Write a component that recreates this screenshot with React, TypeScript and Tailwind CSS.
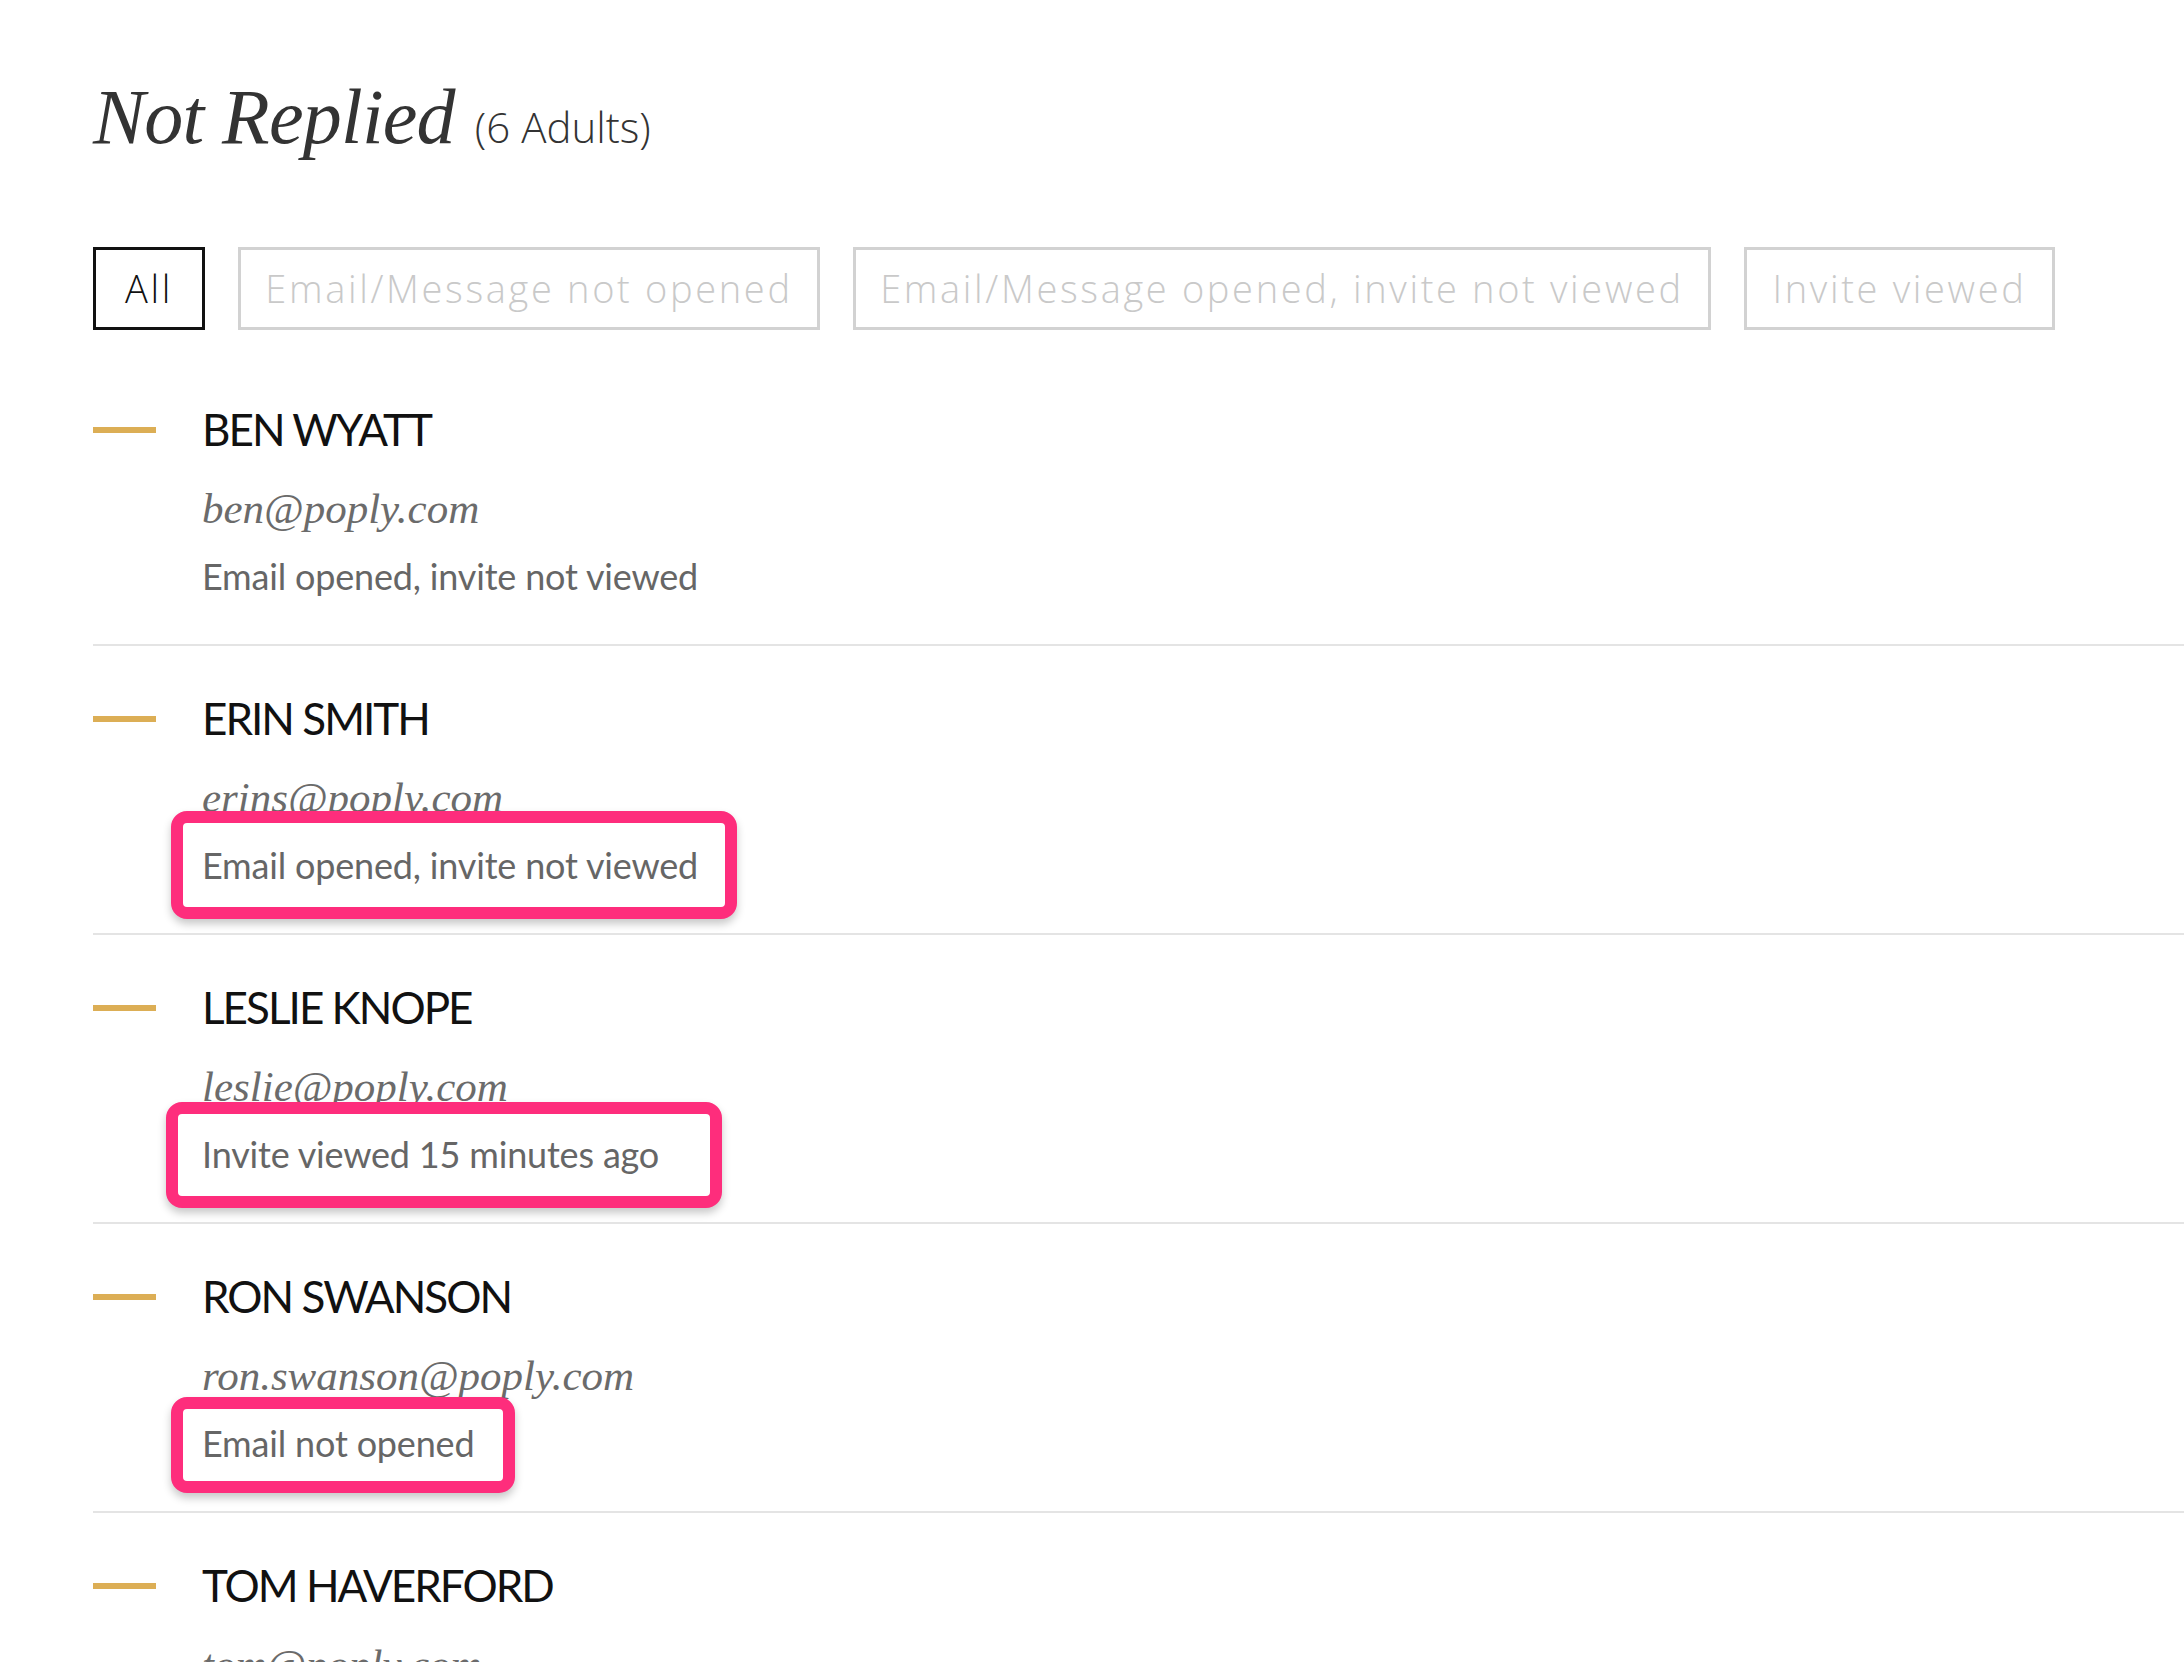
import React from 'react';

type Person = {
  name: string;
  email: string;
  status: string;
  // hand-drawn highlight box around the status line
  mark?: string;
};

const people: Person[] = [
  {
    name: 'BEN WYATT',
    email: 'ben@poply.com',
    status: 'Email opened, invite not viewed',
  },
  {
    name: 'ERIN SMITH',
    email: 'erins@poply.com',
    status: 'Email opened, invite not viewed',
    mark: 'left-[-31px] top-[-29px] w-[566px] h-[108px]',
  },
  {
    name: 'LESLIE KNOPE',
    email: 'leslie@poply.com',
    status: 'Invite viewed 15 minutes ago',
    mark: 'left-[-36px] top-[-27px] w-[556px] h-[106px]',
  },
  {
    name: 'RON SWANSON',
    email: 'ron.swanson@poply.com',
    status: 'Email not opened',
    mark: 'left-[-31px] top-[-21px] w-[344px] h-[96px]',
  },
  {
    name: 'TOM HAVERFORD',
    email: 'tom@poply.com',
    status: 'Email not opened',
  },
];

const filters = [
  { label: 'All', width: 'w-[112px]', active: true },
  { label: 'Email/Message not opened', width: 'w-[582px]', active: false },
  { label: 'Email/Message opened, invite not viewed', width: 'w-[858px]', active: false },
  { label: 'Invite viewed', width: 'w-[311px]', active: false },
];

const FilterButton = ({
  label,
  width,
  active,
}: {
  label: string;
  width: string;
  active: boolean;
}) => (
  <button
    className={`${width} flex h-[83px] shrink-0 items-center justify-center whitespace-nowrap border-[3px] font-['Open_Sans',sans-serif] text-[38px] font-light tracking-[0.07em] ${
      active ? 'border-[#111] text-[#111]' : 'border-[#d2d2d2] text-[#c9c9c9]'
    }`}
  >
    {label}
  </button>
);

const PersonRow = ({ person }: { person: Person }) => (
  <div className="border-b-2 border-[#e4e4e4] pt-[46px] pb-[43px]">
    <div className="flex items-center gap-[46px]">
      <span className="h-[6px] w-[63px] shrink-0 bg-[#dcae55]" />
      <h2 className="font-['Lato',sans-serif] text-[44px] leading-[53px] tracking-[-0.045em] text-[#111]">
        {person.name}
      </h2>
    </div>
    <div className="pl-[109px]">
      <p className="mt-[23px] font-['Liberation_Serif',serif] text-[43px] italic leading-[60px] text-[#6b6b6b]">
        {person.email}
      </p>
      <div className="relative mt-[12px] w-fit">
        {person.mark && (
          <span
            className={`absolute ${person.mark} rounded-[16px] border-[12px] border-[#fe2d7c] bg-white shadow-[0_5px_8px_rgba(0,0,0,0.22)]`}
          />
        )}
        <span className="relative whitespace-nowrap font-['Lato',sans-serif] text-[36px] leading-[50px] tracking-[-0.005em] text-[#666]">
          {person.status}
        </span>
      </div>
    </div>
  </div>
);

export default function App() {
  return (
    <div className="h-screen overflow-hidden bg-white pl-[93px]">
      <div className="flex items-baseline gap-[20px] pt-[72px]">
        <h1 className="font-['Liberation_Serif',serif] text-[78px] italic leading-[90px] tracking-[-0.01em] text-[#333]">
          Not Replied
        </h1>
        <span className="font-['Open_Sans',sans-serif] text-[42px] font-light leading-none text-[#333]">
          (6 Adults)
        </span>
      </div>

      <div className="mt-[85px] flex gap-[33px]">
        {filters.map((f) => (
          <FilterButton key={f.label} {...f} />
        ))}
      </div>

      <div className="mt-[27px]">
        {people.map((p) => (
          <PersonRow key={p.name} person={p} />
        ))}
      </div>
    </div>
  );
}
